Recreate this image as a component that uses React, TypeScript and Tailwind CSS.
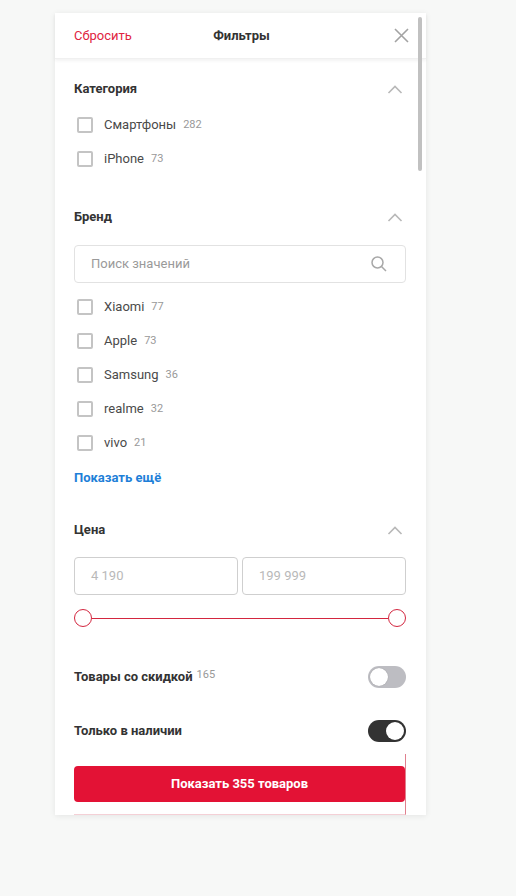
import React from 'react';

const categories = [
  { name: 'Смартфоны', count: 282 },
  { name: 'iPhone', count: 73 },
];

const brands = [
  { name: 'Xiaomi', count: 77 },
  { name: 'Apple', count: 73 },
  { name: 'Samsung', count: 36 },
  { name: 'realme', count: 32 },
  { name: 'vivo', count: 21 },
];

function Chevron() {
  return (
    <svg width="16" height="9" viewBox="0 0 16 9" className="mr-[3px]">
      <polyline points="1.5,8 8,1.5 14.5,8" fill="none" stroke="#b8b8b8" strokeWidth="1.6" />
    </svg>
  );
}

function SectionTitle({ title, className = '' }: { title: string; className?: string }) {
  return (
    <div className={`h-5 flex items-center justify-between ${className}`}>
      <span className="text-[13px] font-bold text-[#333]">{title}</span>
      <Chevron />
    </div>
  );
}

function CheckRow({ name, count }: { name: string; count: number }) {
  return (
    <div className="h-[34px] flex items-center">
      <span className="ml-[3px] w-4 h-4 border-2 border-[#c4c4c4] rounded-[2px] bg-white flex-shrink-0" />
      <span className="ml-[11px] text-[13px] text-[#4a4a4a]">{name}</span>
      <span className="ml-[7px] text-[11px] text-[#999]">{count}</span>
    </div>
  );
}

function Toggle({ on }: { on: boolean }) {
  return (
    <div
      className={`w-[38px] h-[22px] rounded-full p-[2px] flex items-center ${
        on ? 'bg-[#333] justify-end' : 'bg-[#bdbdc2] justify-start'
      }`}
    >
      <span className="w-[18px] h-[18px] rounded-full bg-white shadow-[0_0_1px_rgba(0,0,0,0.3)]" />
    </div>
  );
}

export default function App() {
  return (
    <div className="min-h-screen bg-[#f7f8f7] font-['Roboto',sans-serif] pt-[13px] pl-[55px]">
      <div className="relative w-[371px] bg-white shadow-[0_1px_6px_rgba(0,0,0,0.08)]">
        {/* Header */}
        <div className="h-[46px] grid grid-cols-3 items-center pl-[19px] pr-[17px] shadow-[0_2px_3px_rgba(0,0,0,0.05)] border-b border-[#f0f0f0]">
          <span className="text-[13px] text-[#e0243f]">Сбросить</span>
          <span className="text-[13px] font-bold text-[#333] text-center">Фильтры</span>
          <div className="flex justify-end">
            <svg width="15" height="15" viewBox="0 0 15 15">
              <path d="M1 1L14 14M14 1L1 14" stroke="#a3a3a3" strokeWidth="1.6" />
            </svg>
          </div>
        </div>

        <div className="pl-[19px] pr-[20px]">
          {/* Категория */}
          <SectionTitle title="Категория" className="mt-[20px]" />
          <div className="mt-[9px]">
            {categories.map((c) => (
              <CheckRow key={c.name} {...c} />
            ))}
          </div>

          {/* Бренд */}
          <SectionTitle title="Бренд" className="mt-[31px]" />
          <div className="mt-[18px] h-[38px] border border-[#e2e2e2] rounded-[4px] flex items-center justify-between pl-4 pr-[18px]">
            <span className="text-[13px] text-[#9a9a9a]">Поиск значений</span>
            <svg width="16" height="16" viewBox="0 0 16 16">
              <circle cx="6.5" cy="6.5" r="5.5" fill="none" stroke="#a8a8a8" strokeWidth="1.5" />
              <path d="M10.5 10.5L15 15" stroke="#a8a8a8" strokeWidth="1.5" />
            </svg>
          </div>
          <div className="mt-[7px]">
            {brands.map((b) => (
              <CheckRow key={b.name} {...b} />
            ))}
            <div className="h-[36px] flex items-center">
              <span className="text-[13px] font-bold text-[#1e7fd8]">Показать ещё</span>
            </div>
          </div>

          {/* Цена */}
          <SectionTitle title="Цена" className="mt-[24px]" />
          <div className="mt-[17px] grid grid-cols-2 gap-[4px]">
            <div className="h-[38px] border border-[#cfcfcf] rounded-[4px] flex items-center pl-4">
              <span className="text-[13px] text-[#b9b9b9]">4 190</span>
            </div>
            <div className="h-[38px] border border-[#cfcfcf] rounded-[4px] flex items-center pl-4">
              <span className="text-[13px] text-[#b9b9b9]">199 999</span>
            </div>
          </div>
          <div className="mt-[14px] h-[18px] flex items-center">
            <span className="w-[18px] h-[18px] rounded-full border border-[#d3263f] bg-white flex-shrink-0" />
            <span className="flex-1 h-px bg-[#d3263f]" />
            <span className="w-[18px] h-[18px] rounded-full border border-[#d3263f] bg-white flex-shrink-0" />
          </div>

          {/* Toggles */}
          <div className="mt-[39px] h-[22px] flex items-center justify-between">
            <div className="flex items-center">
              <span className="text-[13px] font-bold text-[#333]">Товары со скидкой</span>
              <span className="ml-[4px] mb-[3px] text-[11px] text-[#999]">165</span>
            </div>
            <Toggle on={false} />
          </div>
          <div className="mt-[32px] h-[22px] flex items-center justify-between">
            <span className="text-[13px] font-bold text-[#333]">Только в наличии</span>
            <Toggle on />
          </div>

          {/* Footer */}
          <div className="mt-[12px] pt-[12px] pb-[12px] border-r border-b border-r-[#e0808e] border-b-[#f4d0d6]">
            <button className="w-full h-[36px] rounded-[4px] bg-[#e31235] text-white text-[13px] font-bold">
              Показать 355 товаров
            </button>
          </div>
        </div>

        {/* Scrollbar */}
        <div className="absolute right-[4px] top-[4px] w-[4px] h-[154px] rounded-full bg-[#c1c1c1]" />
      </div>
    </div>
  );
}
